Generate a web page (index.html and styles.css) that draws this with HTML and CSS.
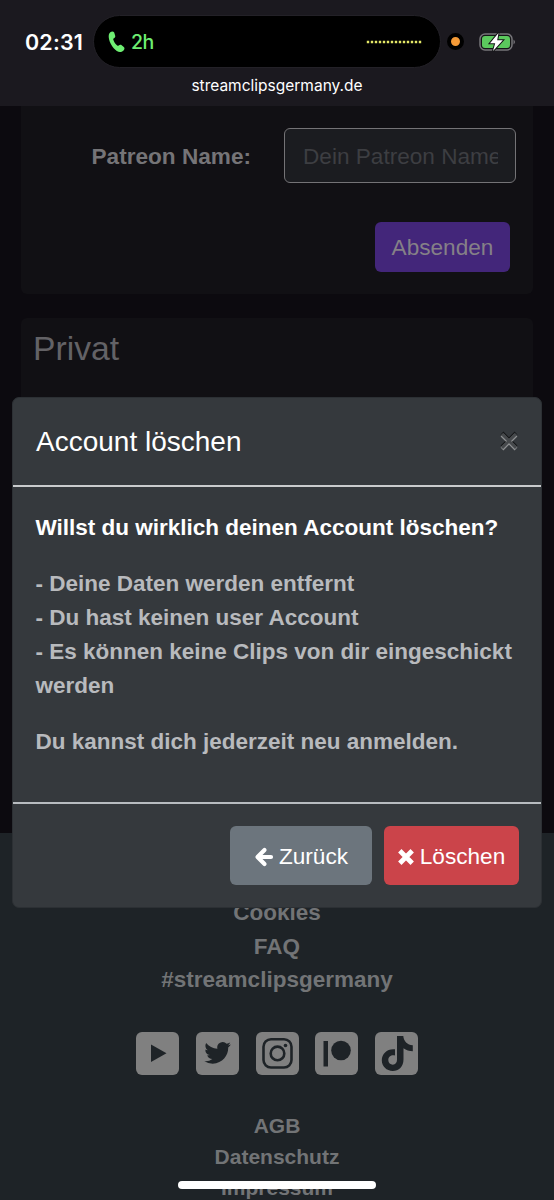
FILE: index.html
```
<!DOCTYPE html>
<html lang="de">
<head>
<meta charset="utf-8">
<title>streamclipsgermany.de</title>
<link rel="stylesheet" href="styles.css">
</head>
<body>
<header class="browser">
  <div class="status">
    <span class="clock">02:31</span>
    <div class="island">
      <svg class="phone" viewBox="0 0 17 22"><path d="M2.3 1.2C3.6.3 5.4.2 6.2 1.5l1 3.2c.3 1.3-.3 2-1.6 2.9-.6.4-.4 1 .1 2.1.9 1.9 2 3.6 3.5 4.8.5.5 1 .4 1.500 0 1-.8 2-.9 3-.2l2.100 1.800c1.100 1 .8 2.500-.5 3.600-1.700 1.500-4.200 1.800-6.500.300C4.900 17.400 1.500 12 .800 6.800.500 4.300.900 2.200 2.300 1.200Z"/></svg>
      <span class="call">2h</span>
      <svg class="wave" viewBox="0 0 56 4"><path d="M.800 2H55.200"/></svg>
    </div>
    <span class="mic"></span>
    <svg class="battery" viewBox="0 0 38 20">
      <rect class="shell" x="1" y="2" width="32" height="16" rx="5"/>
      <rect class="charge" x="3" y="4" width="28" height="12" rx="3"/>
      <path class="tip" d="M34.500 7.500q3 2.500 0 5Z"/>
      <path class="bolt" d="M19.500 1 11 11.200h5.200L14 19l9.800-10.700h-5.600Z"/>
    </svg>
  </div>
  <div class="address">streamclipsgermany.de</div>
</header>
<main class="page">
  <section class="card card-form">
    <div class="row"><label class="label" for="patreon">Patreon Name:</label><div class="input" id="patreon"><span class="placeholder">Dein Patreon Name</span></div></div>
    <button class="btn send">Absenden</button>
  </section>
  <section class="card card-private"><h2 class="heading">Privat</h2></section>
</main>
<footer class="footer">
  <nav class="links"><a>Cookies</a><a>FAQ</a><a>#streamclipsgermany</a></nav>
  <div class="social">
    <svg viewBox="0 0 43 43"><rect class="tile" width="43" height="43" rx="6"/><path class="ink" d="M15 12.500v17.500l15.500-8.750Z"/></svg>
    <svg viewBox="0 0 43 43"><rect class="tile" width="43" height="43" rx="6"/><path class="ink" transform="translate(8.300 7.500) scale(1.110)" d="M23.950 4.570a10 10 0 0 1-2.820.780 4.960 4.960 0 0 0 2.160-2.730 9.900 9.900 0 0 1-3.130 1.200 4.920 4.920 0 0 0-8.380 4.480C7.690 8.090 4.070 6.130 1.640 3.160a4.920 4.920 0 0 0 1.520 6.570 4.900 4.900 0 0 1-2.230-.610v.060a4.920 4.920 0 0 0 3.950 4.830 5 5 0 0 1-2.210.080 4.940 4.940 0 0 0 4.600 3.420A9.870 9.870 0 0 1 0 19.540a14 14 0 0 0 7.550 2.210c9.050 0 14-7.500 14-13.980 0-.210 0-.420-.020-.630a9.900 9.900 0 0 0 2.420-2.570Z"/></svg>
    <svg viewBox="0 0 43 43"><rect class="tile" width="43" height="43" rx="6"/><g class="line"><rect x="7.500" y="7.200" width="28" height="28.300" rx="7.500"/><circle cx="21.500" cy="21.400" r="6.800"/></g><circle class="ink" cx="29.500" cy="13.500" r="1.800"/></svg>
    <svg viewBox="0 0 43 43"><rect class="tile" width="43" height="43" rx="6"/><path class="ink" d="M8.500 9H13v25.500H8.500Z"/><circle class="ink" cx="26" cy="18.500" r="9.800"/></svg>
    <svg viewBox="0 0 43 43"><rect class="tile" width="43" height="43" rx="6"/><path class="ink" d="M22 4h6.300c.300 5 4 9 9.500 9.300v6c-3.500 0-6.700-1-9.300-3v11.200C28.500 34.500 23.800 39 17.800 39 11.500 39 6.800 34.300 6.800 28.300c0-7 6-12 13.200-11v6.200c-3.600-1-6.700 1.300-6.700 4.500 0 2.900 2.100 4.700 4.500 4.700 2.500 0 4.200-2 4.200-4.900Z"/></svg>
  </div>
  <nav class="legal"><a>AGB</a><a>Datenschutz</a><a>Impressum</a></nav>
</footer>
<div class="modal" role="dialog">
  <div class="modal-head"><h5 class="title">Account löschen</h5><svg class="close" viewBox="0 0 20 20"><path class="close-dark" d="m3 2 14 14M17 2 3 16"/><path class="close-light" d="m3 4 14 14M17 4 3 18"/><path class="close-fill" d="m3 3 14 14M17 3 3 17"/></svg></div>
  <div class="modal-body">
    <p class="question">Willst du wirklich deinen Account löschen?</p>
    <p>- Deine Daten werden entfernt<br>- Du hast keinen user Account<br>- Es können keine Clips von dir eingeschickt<br>werden</p>
    <p>Du kannst dich jederzeit neu anmelden.</p>
  </div>
  <div class="modal-foot">
    <button class="btn back"><svg class="arrow" viewBox="0 0 20 20"><path d="M10.500 3 3.500 10l7 7M4 10H17"/></svg><span>Zurück</span></button>
    <button class="btn delete"><svg class="cross" viewBox="0 0 16 16"><path d="m3.500 3.500 9 9M12.500 3.500l-9 9"/></svg><span>Löschen</span></button>
  </div>
</div>
<div class="home-bar"></div>
</body>
</html>
```

FILE: styles.css
```
* { box-sizing: border-box; }
body {
  position: relative;
  display: flex;
  flex-direction: column;
  width: 554px;
  height: 1200px;
  margin: 0;
  overflow: hidden;
  background: #0c0a0f;
  font: 22.6px/34px "Liberation Sans", sans-serif;
}
h2, h5, p { margin: 0; }
svg { display: block; flex: none; }

.browser { height: 106px; flex: none; background: #1b191f; color: #fff; }
.status { display: flex; align-items: center; padding: 15px 0 0 25px; }
.clock { width: 68px; font: 600 21.500px/26px Inter, sans-serif; letter-spacing: .15px; white-space: nowrap; }
.island {
  display: flex;
  align-items: center;
  width: 348px;
  height: 53px;
  padding: 0 18px 0 14px;
  border: 1px solid #232127;
  border-radius: 27px;
  background: #000;
}
.phone { width: 17px; height: 22px; fill: #6eee72; }
.call { margin-left: 6px; color: #6eee72; font: 500 19.500px/26px Inter, sans-serif; letter-spacing: -.4px; }
.wave { width: 56px; height: 4px; margin-left: auto; }
.wave path { fill: none; stroke: #e4e867; stroke-width: 2.400; stroke-dasharray: 2.400 1.600; }
.mic { width: 17px; height: 17px; margin-left: 6px; border: 4px solid #000; border-radius: 50%; background: #f49a37; }
.battery { width: 38px; height: 20px; margin-left: 15px; }
.shell { fill: #151617; stroke: #77757a; stroke-width: 1.500; }
.charge { fill: #5bc95d; }
.tip { fill: #77757a; }
.bolt { fill: #fff; stroke: #151617; stroke-width: 2; paint-order: stroke; }
.address { margin-top: 6px; text-align: center; font: 400 15.500px/24px Inter, sans-serif; }

.page { flex: none; height: 727px; padding: 0 21px; }
.card { background: #111014; }
.card-form {
  display: flex;
  flex-direction: column;
  align-items: flex-end;
  height: 188px;
  padding: 22px 17px 0 0;
  border-radius: 0 0 6px 6px;
}
.row { display: flex; align-items: center; }
.label { margin-right: 33px; padding-top: 2px; color: #757477; font-weight: 700; }
.input {
  display: flex;
  align-items: center;
  width: 232px;
  height: 55px;
  padding: 2px 17px 0 18px;
  border: 1.500px solid #747376;
  border-radius: 6px;
  background: #1b1c20;
}
.placeholder { overflow: hidden; color: #3d3e42; white-space: nowrap; }
.btn {
  display: flex;
  align-items: center;
  justify-content: center;
  padding: 0;
  border: 0;
  border-radius: 6px;
  color: #fff;
  font: inherit;
}
.send { width: 135px; height: 50px; margin: 39px 6px 0 0; padding-top: 2px; background: #43267a; color: #858087; }
.card-private { height: 300px; margin-top: 24px; padding: 9px 12px; border-radius: 6px; }
.heading { color: #636266; font-size: 33.700px; font-weight: 400; line-height: 43px; }

.footer {
  display: flex;
  flex: none;
  flex-direction: column;
  align-items: center;
  height: 367px;
  padding-top: 63px;
  background: #1e2327;
  color: #727476;
  font-weight: 700;
}
.links, .legal { display: flex; flex-direction: column; align-items: center; }
.links { font-size: 22.500px; line-height: 33.600px; }
.social { display: flex; gap: 16.800px; margin-top: 35px; }
.social svg { width: 43px; height: 43px; }
.tile { fill: #808080; }
.ink { fill: #1e2327; }
.line { fill: none; stroke: #1e2327; stroke-width: 2.600; }
.legal { margin-top: 35px; font-size: 21px; line-height: 31.300px; }

.modal {
  position: absolute;
  top: 397px;
  left: 12px;
  width: 530px;
  height: 511px;
  border: 1px solid #2c3034;
  border-radius: 7px;
  background: #35393d;
}
.modal-head {
  display: flex;
  align-items: center;
  justify-content: space-between;
  height: 89px;
  padding: 1px 23px 0;
  border-bottom: 2px solid #c9cbcd;
}
.title { color: #fff; font-size: 28px; font-weight: 400; }
.close { width: 20px; height: 20px; margin: 0 -1px 3px 0; }
.close path { fill: none; stroke-width: 4; }
.close .close-dark { stroke: #17191b; }
.close .close-light { stroke: #8e9092; }
.close .close-fill { stroke: #46494c; stroke-width: 3; }
.modal-body { height: 315px; padding: 24px 22.500px 0; color: #b8babd; font-size: 22.500px; font-weight: 700; }
.modal-body p { margin-bottom: 22px; white-space: nowrap; }
.modal-body .question { color: #fff; }
.modal-foot { display: flex; justify-content: flex-end; gap: 12px; padding: 22px 22px; border-top: 2px solid #b8bcc0; }
.modal-foot .btn { height: 59px; padding-top: 2px; }
.back { width: 142px; gap: 5px; background: #6c757d; }
.delete { width: 135px; gap: 6px; background: #cb444a; }
.arrow { width: 20px; height: 20px; }
.cross { width: 16px; height: 16px; }
.arrow path, .cross path { fill: none; stroke: #fff; stroke-width: 4.200; stroke-linecap: round; stroke-linejoin: round; }
.cross path { stroke-width: 4.800; stroke-linecap: square; }
.home-bar {
  position: absolute;
  bottom: 11px;
  left: 178px;
  width: 198px;
  height: 8px;
  border-radius: 4px;
  background: #fff;
}
```
